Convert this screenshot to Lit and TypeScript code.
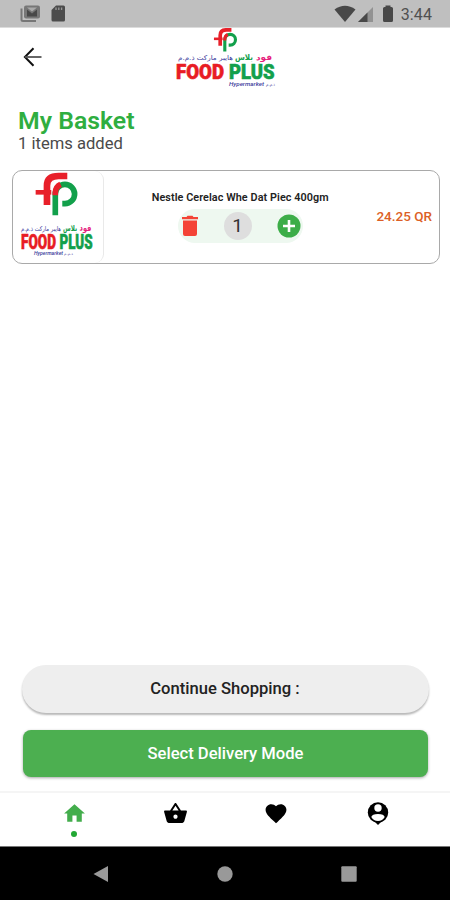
import { LitElement, html, svg, css } from "lit";
import { customElement, property } from "lit/decorators.js";

const mark = (transform: string) => svg`
  <g transform=${transform} fill="none">
    <path d="M148 18H122Q87 18 87 47V105" stroke="#e8202a" stroke-width="20"/>
    <path d="M53 67H100" stroke="#e8202a" stroke-width="14"/>
    <path d="M112 136V72A29 29 0 1 1 141 101H133" stroke="#12a04b" stroke-width="17"/>
    <path d="M112 76V68Q113 50 128 43" stroke="#e8202a" stroke-width="17"/>
  </g>`;

@customElement("food-logo")
class FoodLogo extends LitElement {
  @property() size = "small";
  static styles = css`
    :host { display: block; }
    svg { display: block; }
    text { font-family: Roboto, "Liberation Sans", sans-serif; }
    .word { font-weight: 900; stroke-width: 0.6px; stroke-linejoin: round; }
    .ar { font-family: "DejaVu Sans", sans-serif; font-weight: 400; }
    .bold { font-weight: 700; }
    .red { fill: #e81c24; stroke: #e81c24; }
    .green { fill: #12a04b; stroke: #12a04b; }
    .g { fill: #12a04b; }
    .p { fill: #e5207c; }
    .b { fill: #3c3c9c; }
    .sub { font-weight: 500; font-style: italic; }
  `;
  render() {
    return this.size === "small"
      ? html`<svg width="104" height="60" viewBox="173 28 104 60">
          ${mark("translate(204.2 26.5) scale(.184)")}
          <text class="ar bold p" x="256" y="60" font-size="8" textLength="16" lengthAdjust="spacingAndGlyphs">فود</text>
          <text class="ar bold g" x="235" y="60" font-size="8" textLength="18" lengthAdjust="spacingAndGlyphs">بلاس</text>
          <text class="ar b" x="178" y="60" font-size="6.5" textLength="55" lengthAdjust="spacingAndGlyphs">هايبر ماركت ذ.م.م</text>
          <text class="word red" x="176" y="79.3" font-size="20" textLength="48" lengthAdjust="spacingAndGlyphs">FOOD</text>
          <text class="word green" x="229" y="79.3" font-size="20" textLength="45.500" lengthAdjust="spacingAndGlyphs">PLUS</text>
          <text class="sub b" x="229" y="85.5" font-size="5.5" textLength="35" lengthAdjust="spacingAndGlyphs">Hypermarket</text>
          <text class="ar b" x="266" y="85.5" font-size="4" textLength="9" lengthAdjust="spacingAndGlyphs">ذ.م.م</text>
        </svg>`
      : html`<svg width="90" height="90" viewBox="13 172 90 90">
          ${mark("translate(18 170) scale(.333)")}
          <text class="ar bold p" x="79.500" y="231" font-size="8.5" textLength="12" lengthAdjust="spacingAndGlyphs">فود</text>
          <text class="ar bold g" x="63" y="231" font-size="8.5" textLength="14" lengthAdjust="spacingAndGlyphs">بلاس</text>
          <text class="ar b" x="21" y="231" font-size="6.5" textLength="40" lengthAdjust="spacingAndGlyphs">هايبر ماركت ذ.م.م</text>
          <text class="word red" x="21" y="248.8" font-size="19.5" textLength="35" lengthAdjust="spacingAndGlyphs">FOOD</text>
          <text class="word green" x="59.500" y="248.8" font-size="19.5" textLength="33" lengthAdjust="spacingAndGlyphs">PLUS</text>
          <text class="sub b" x="34" y="255.3" font-size="4.8" textLength="29" lengthAdjust="spacingAndGlyphs">Hypermarket</text>
          <text class="ar b" x="64" y="255.3" font-size="3.6" textLength="9" lengthAdjust="spacingAndGlyphs">ذ.م.م</text>
        </svg>`;
  }
}

@customElement("app-root")
class AppRoot extends LitElement {
  static styles = css`
    :host {
      display: flex; flex-direction: column; width: 450px; height: 900px; overflow: hidden;
      background: #fff; color: #222; font-family: Roboto, "Liberation Sans", sans-serif;
    }
    * { box-sizing: border-box; }
    svg { display: block; }
    .status { height: 28px; background: #bfbfbf; border-bottom: 1px solid #dcdcdc; display: flex; align-items: center; padding: 0 18px 0 20px; color: #505050; flex: none; }
    .status .left { display: flex; gap: 10px; flex: 1; }
    .clock { font-size: 16px; line-height: 28px; margin-left: 1px; letter-spacing: 0.1px; padding-top: 2px; }
    .head { height: 60px; display: grid; grid-template-columns: 173px 104px 1fr; flex: none; }
    .back { padding: 19px 0 0 23px; }
    .titles { padding: 18px 18px 0; height: 83px; flex: none; }
    h1 { margin: 0; font-size: 24.8px; line-height: 29px; font-weight: 600; color: #2fae40; }
    .count { font-size: 16.6px; line-height: 18px; color: #4a4a4a; }
    .card { margin: -1px 10px 0 12px; height: 94px; border: 1px solid #a9a9a9; border-radius: 10px; display: flex; flex: none; }
    .thumb { width: 91px; height: 92px; border-right: 1px solid #e9e9e9; border-radius: 9px; flex: none; padding-top: 1px; }
    .info { width: 273px; display: flex; flex-direction: column; align-items: center; padding-top: 19px; }
    .name { font-size: 10.8px; line-height: 16px; font-weight: 600; letter-spacing: 0.08px; white-space: nowrap; }
    .qty { margin-top: 3px; width: 125px; height: 34px; border-radius: 17px; background: #eef8f0; display: flex; align-items: center; justify-content: space-between; padding: 0 2px 0 3px; }
    .num { width: 28px; height: 28px; border-radius: 50%; background: #dedede; color: #333; font-size: 19px; line-height: 28px; text-align: center; }
    .price { flex: 1; padding: 37px 7px 0 0; text-align: right; font-size: 13.5px; line-height: 16px; font-weight: 500; color: #dc5f26; white-space: nowrap; }
    .actions { margin-top: auto; display: flex; flex-direction: column; gap: 17px; padding: 0 22px 14px; }
    .btn { display: flex; align-items: center; justify-content: center; font-size: 16.6px; font-weight: 500; }
    .more { height: 48px; width: 407px; border-radius: 24px; background: #eee; box-shadow: 0 2px 2px rgba(0,0,0,.28); padding: 0 1px 2px 0; }
    .go { height: 47px; width: 405px; margin-left: 1px; border-radius: 8px; background: #4caf50; color: #fff; box-shadow: 0 1px 3px rgba(0,0,0,.35); padding-bottom: 1px; }
    .nav { height: 55px; border-top: 2px solid #f5f5f5; display: grid; grid-template-columns: repeat(4, 101.2px); padding-left: 23.5px; flex: none; }
    .item { display: flex; flex-direction: column; align-items: center; padding-top: 8px; }
    .dot { width: 6px; height: 6px; border-radius: 50%; background: #22a834; margin-top: 5px; }
    .sys { height: 54px; background: #000; border-top: 1px solid #777; display: grid; grid-template-columns: repeat(3, 124px); padding-left: 39px; align-items: center; justify-items: center; flex: none; }
  `;
  render() {
    return html`
      <div class="status">
        <div class="left">
          <svg width="21" height="19" viewBox="0 0 21 19"><path d="M1.500 4.500V15.500Q1.500 17 3 17H16" fill="none" stroke="#777" stroke-width="2"/><rect x="4" y="1.500" width="16" height="13" rx="2" fill="#777"/><path d="M7 12.500V5.500L12 9.500L17 5.500V12.500Z" fill="#484848"/><path d="M7 3.500H17L12 7.500Z" fill="#aaa"/></svg>
          <svg width="15" height="19" viewBox="0 0 15 19"><path d="M5 1.500H12.500Q14 1.500 14 3V16Q14 17.500 12.500 17.500H2Q.5 17.500 .5 16V6Z" fill="#4c4c4c"/><path d="M5 3.500V6M7.800 3.500V6M10.600 3.500V6" stroke="#999" stroke-width="1.300"/></svg>
        </div>
        <svg width="66" height="18" viewBox="333 5 66 18"><path d="M333.500 9.500Q344 2 354.500 9.500L344 22Z" fill="#484848"/><path d="M372 7V22H357Z" fill="#929292"/><path d="M366.500 12.500V22H357Z" fill="#484848"/><path d="M384.500 7V5.500H389.500V7H390.500Q392 7 392 8.500V20.500Q392 22 390.500 22H383.500Q382 22 382 20.500V8.500Q382 7 383.500 7Z" fill="#484848"/></svg>
        <span class="clock">3:44</span>
      </div>
      <div class="head">
        <div class="back"><svg width="20" height="20" viewBox="0 0 20 20" fill="none" stroke="#111" stroke-width="2"><path d="M10.500 1.300L1.900 10L10.500 18.700"/><path d="M2 10H18.500" stroke="#555" stroke-width="1.800"/></svg></div>
        <food-logo size="small"></food-logo>
      </div>
      <div class="titles"><h1>My Basket</h1><div class="count">1 items added</div></div>
      <div class="card">
        <div class="thumb"><food-logo size="large"></food-logo></div>
        <div class="info">
          <div class="name">Nestle Cerelac Whe Dat Piec 400gm</div>
          <div class="qty">
            <svg width="18" height="22" viewBox="0 0 18 22" fill="#f44336"><path d="M1 2H5.500L6.500 .8H11.500L12.500 2H17V4.300H1ZM2 5.500H16V19Q16 21 14 21H4Q2 21 2 19Z"/></svg>
            <span class="num">1</span>
            <svg width="24" height="24" viewBox="0 0 24 24"><circle cx="12" cy="12" r="11.500" fill="#3cad48"/><path d="M12 6V18M6 12H18" stroke="#fff" stroke-width="2.600"/></svg>
          </div>
        </div>
        <div class="price">24.25 QR</div>
      </div>
      <div class="actions">
        <div class="btn more">Continue Shopping :</div>
        <div class="btn go">Select Delivery Mode</div>
      </div>
      <div class="nav">
        <div class="item"><svg width="25" height="25" viewBox="0 0 24 24" fill="#43ad4c"><path d="M10 20v-6h4v6h5v-8h3L12 3 2 12h3v8z"/></svg><span class="dot"></span></div>
        <div class="item"><svg width="25" height="25" viewBox="0 0 24 24"><path d="M17.210 9l-4.380-6.560c-.19-.28-.51-.42-.83-.42-.32 0-.64.14-.83.43L6.790 9H2c-.55 0-1 .45-1 1 0 .09.010.18.040.27l2.540 9.270c.23.84 1 1.460 1.920 1.460h13c.92 0 1.690-.62 1.930-1.460l2.540-9.270L23 10c0-.55-.45-1-1-1h-4.790zM9 9l3-4.400L15 9H9zm3 8c-1.100 0-2-.9-2-2s.9-2 2-2 2 .9 2 2-.9 2-2 2z"/></svg></div>
        <div class="item"><svg width="26" height="25" viewBox="0 0 24 24"><path d="M12 21.350l-1.450-1.320C5.400 15.360 2 12.280 2 8.500 2 5.420 4.420 3 7.500 3c1.740 0 3.410.81 4.500 2.090C13.090 3.810 14.760 3 16.500 3 19.580 3 22 5.420 22 8.500c0 3.780-3.400 6.860-8.550 11.540L12 21.350z"/></svg></div>
        <div class="item"><svg width="24" height="25" viewBox="0 0 24 25"><path d="M9 21L12 24L15 21Z"/><circle cx="12" cy="11.500" r="10.200"/><circle cx="12" cy="7" r="3.700" fill="#fff"/><path d="M5.300 16Q6 13 12 13Q18 13 18.700 16Q16.500 19.900 12 19.900Q7.500 19.900 5.300 16Z" fill="#fff"/></svg></div>
      </div>
      <div class="sys">
        <svg width="16" height="16" viewBox="0 0 16 16"><path d="M0.500 8L15 0V16Z" fill="#999"/></svg>
        <svg width="16" height="16" viewBox="0 0 16 16"><circle cx="8" cy="8" r="7.700" fill="#999"/></svg>
        <svg width="16" height="16" viewBox="0 0 16 16"><rect x=".3" y=".3" width="15.400" height="15.400" rx="1" fill="#999"/></svg>
      </div>`;
  }
}
